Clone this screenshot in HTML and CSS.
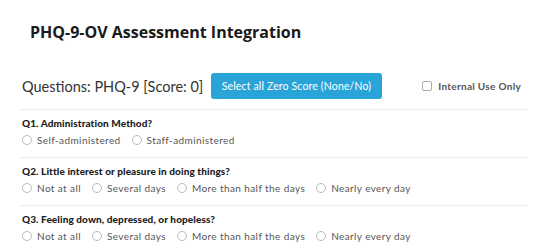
FILE: index.html
```html
<!DOCTYPE html>
<html lang="en">
<head>
    <meta charset="UTF-8">
    <meta name="viewport" content="width=device-width, initial-scale=1.0">
    <title>PHQ-9-OV Assessment Integration</title>
    <link rel="stylesheet" href="styles.css">
</head>
<body>
    <div class="page">
        <h1 class="title">PHQ-9-OV Assessment Integration</h1>

        <div class="toolbar">
            <span class="score">Questions: PHQ-9 [Score: 0]</span>
            <button class="btn-zero">Select all Zero Score (None/No)</button>
            <label class="internal"><span class="box"></span>Internal Use Only</label>
        </div>

        <div class="question">
            <div class="q-label">Q1. Administration Method?</div>
            <div class="options">
                <label class="opt"><span class="radio"></span>Self-administered</label>
                <label class="opt"><span class="radio"></span>Staff-administered</label>
            </div>
        </div>

        <div class="question">
            <div class="q-label">Q2. Little interest or pleasure in doing things?</div>
            <div class="options">
                <label class="opt"><span class="radio"></span>Not at all</label>
                <label class="opt"><span class="radio"></span>Several days</label>
                <label class="opt"><span class="radio"></span>More than half the days</label>
                <label class="opt"><span class="radio"></span>Nearly every day</label>
            </div>
        </div>

        <div class="question">
            <div class="q-label">Q3. Feeling down, depressed, or hopeless?</div>
            <div class="options">
                <label class="opt"><span class="radio"></span>Not at all</label>
                <label class="opt"><span class="radio"></span>Several days</label>
                <label class="opt"><span class="radio"></span>More than half the days</label>
                <label class="opt"><span class="radio"></span>Nearly every day</label>
            </div>
        </div>
    </div>
</body>
</html>
```

FILE: styles.css
```css
body {
    margin: 0;
    background: #fff;
    font-family: Lato, "Noto Sans", sans-serif;
    color: #333;
}
.page {
    width: 507px;
    padding: 0 0 0 20px;
}
.title {
    font-family: "Open Sans", sans-serif;
    font-weight: 700;
    font-size: 16px;
    line-height: 22px;
    color: #1a1a1a;
    margin: 21px 0 0 10px;
}
.toolbar {
    display: flex;
    align-items: center;
    height: 26px;
    margin-top: 30px;
    padding: 0 2px 10px;
    border-bottom: 1px solid #ececec;
}
.score {
    font-size: 14.5px;
    color: #333;
}
.btn-zero {
    margin-left: 8px;
    height: 26px;
    padding: 0 10.5px;
    border: none;
    border-radius: 3px;
    background: #29a4d9;
    color: #fff;
    font-family: Lato, sans-serif;
    font-size: 10.5px;
    letter-spacing: 0.15px;
}
.internal {
    display: flex;
    align-items: center;
    margin-left: auto;
    margin-right: 4px;
    font-size: 10px;
    font-weight: 700;
    color: #555;
    letter-spacing: 0.3px;
}
.box {
    width: 8px;
    height: 8px;
    border: 1px solid #aaa;
    border-radius: 2px;
    margin-right: 6px;
}
.question {
    padding: 6px 2px 10px;
    border-bottom: 1px solid #ececec;
}
.q-label {
    font-size: 10px;
    line-height: 14px;
    font-weight: 900;
    color: #222;
    letter-spacing: 0.1px;
    margin-bottom: 3px;
}
.options {
    display: flex;
    gap: 11px;
    line-height: 14px;
}
.opt {
    display: flex;
    align-items: center;
    font-size: 10px;
    color: #555;
    letter-spacing: 0.4px;
}
.radio {
    width: 8px;
    height: 8px;
    border: 1px solid #bbb;
    border-radius: 50%;
    margin-right: 5px;
}
```
